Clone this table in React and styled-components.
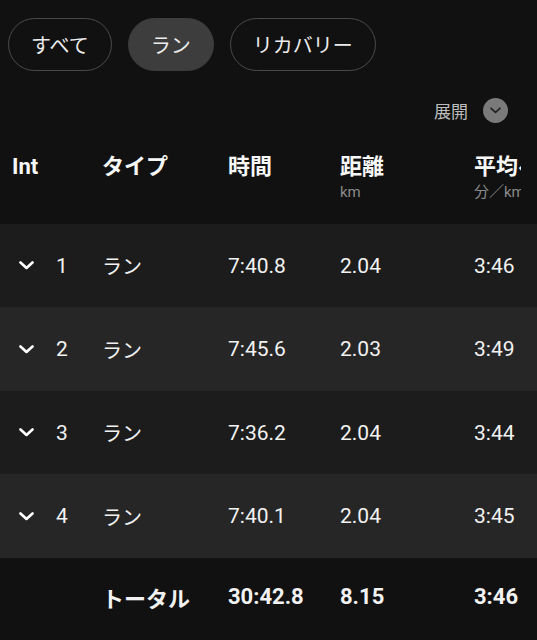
import React from "react";
import styled, { createGlobalStyle } from "styled-components";

const Global = createGlobalStyle`
  html, body { margin: 0; padding: 0; background: #111111; }
  body { font-family: Roboto, "Noto Sans CJK JP", sans-serif; color: #f2f2f2; overflow: hidden; }
  * { box-sizing: border-box; }
`;

const Page = styled.div`
  width: 537px;
  height: 640px;
  background: #111111;
  overflow: hidden;
  display: flex;
  flex-direction: column;
`;

const ChipBar = styled.div`
  display: flex;
  gap: 16px;
  padding: 18px 0 0 8px;
`;

const Chip = styled.div`
  height: 53px;
  padding: 0 22px;
  border-radius: 27px;
  display: flex;
  align-items: center;
  font-size: 20px;
  color: #ececec;
  border: 1px solid ${(p) => (p.$active ? "#3d3d3d" : "#4a4a4a")};
  background: ${(p) => (p.$active ? "#3d3d3d" : "transparent")};
`;

const ExpandRow = styled.div`
  display: flex;
  justify-content: flex-end;
  align-items: center;
  gap: 15px;
  height: 28px;
  margin-top: 25px;
  padding-right: 29px;
  font-size: 17px;
  color: #bdbdbd;
`;

const ExpandIcon = styled.span`
  width: 25px;
  height: 25px;
  border-radius: 50%;
  background: #7a7a7a;
  display: flex;
  align-items: center;
  justify-content: center;
`;

const Row = styled.div`
  display: grid;
  grid-template-columns: 102px 126px 112px 134px 47px;
  align-items: center;
  height: ${(p) => p.$h}px;
  background: ${(p) => p.$bg};
  font-size: ${(p) => (p.$bold ? 22 : 21)}px;
  font-weight: ${(p) => (p.$bold ? 700 : 400)};
  padding-bottom: ${(p) => (p.$bold ? 5 : 0)}px;
`;

const HeaderRow = styled(Row)`
  align-items: start;
  padding-top: 28px;
`;

const Cell = styled.div`
  white-space: nowrap;
  overflow: hidden;
`;

const IntCell = styled.div`
  display: flex;
  align-items: center;
  padding-left: 19px;
  gap: 22px;
`;

const HeadTitle = styled.div`
  font-size: 22px;
  font-weight: 700;
  line-height: 30px;
  color: #f7f7f7;
`;

const HeadSub = styled.div`
  font-size: 15px;
  line-height: 20px;
  margin-top: 0;
  color: #8a8a8a;
`;

const TypeText = styled.span`
  font-size: ${(p) => (p.$bold ? 22 : 20)}px;
`;

const Chevron = ({ color = "#fff", w = 15, h = 9, sw = 2.6 }) => (
  <svg width={w} height={h} viewBox="0 0 15 9" fill="none">
    <polyline points="1.5,1.5 7.5,7 13.5,1.5" stroke={color} strokeWidth={sw} strokeLinecap="round" strokeLinejoin="round" />
  </svg>
);

const laps = [
  { n: 1, t: "7:40.8", d: "2.04", p: "3:46" },
  { n: 2, t: "7:45.6", d: "2.03", p: "3:49" },
  { n: 3, t: "7:36.2", d: "2.04", p: "3:44" },
  { n: 4, t: "7:40.1", d: "2.04", p: "3:45" },
];

export default function App() {
  return (
    <Page>
      <Global />
      <ChipBar>
        <Chip>すべて</Chip>
        <Chip $active>ラン</Chip>
        <Chip>リカバリー</Chip>
      </ChipBar>
      <ExpandRow>
        展開
        <ExpandIcon>
          <Chevron color="#222" w={11} h={7} sw={2.4} />
        </ExpandIcon>
      </ExpandRow>
      <HeaderRow $h={100} $bg="#111111">
        <Cell style={{ paddingLeft: 12 }}>
          <HeadTitle>Int</HeadTitle>
        </Cell>
        <Cell>
          <HeadTitle>タイプ</HeadTitle>
        </Cell>
        <Cell>
          <HeadTitle>時間</HeadTitle>
        </Cell>
        <Cell>
          <HeadTitle>距離</HeadTitle>
          <HeadSub>km</HeadSub>
        </Cell>
        <Cell>
          <HeadTitle>平均ペース</HeadTitle>
          <HeadSub>分／km</HeadSub>
        </Cell>
      </HeaderRow>
      {laps.map((l, i) => (
        <Row key={l.n} $h={i % 2 === 0 ? 83 : 84} $bg={i % 2 === 0 ? "#1c1c1c" : "#262626"}>
          <IntCell>
            <Chevron />
            <span>{l.n}</span>
          </IntCell>
          <Cell>
            <TypeText>ラン</TypeText>
          </Cell>
          <Cell>{l.t}</Cell>
          <Cell>{l.d}</Cell>
          <Cell>{l.p}</Cell>
        </Row>
      ))}
      <Row $h={82} $bg="#111111" $bold>
        <Cell />
        <Cell>
          <TypeText $bold>トータル</TypeText>
        </Cell>
        <Cell>30:42.8</Cell>
        <Cell>8.15</Cell>
        <Cell>3:46</Cell>
      </Row>
    </Page>
  );
}
